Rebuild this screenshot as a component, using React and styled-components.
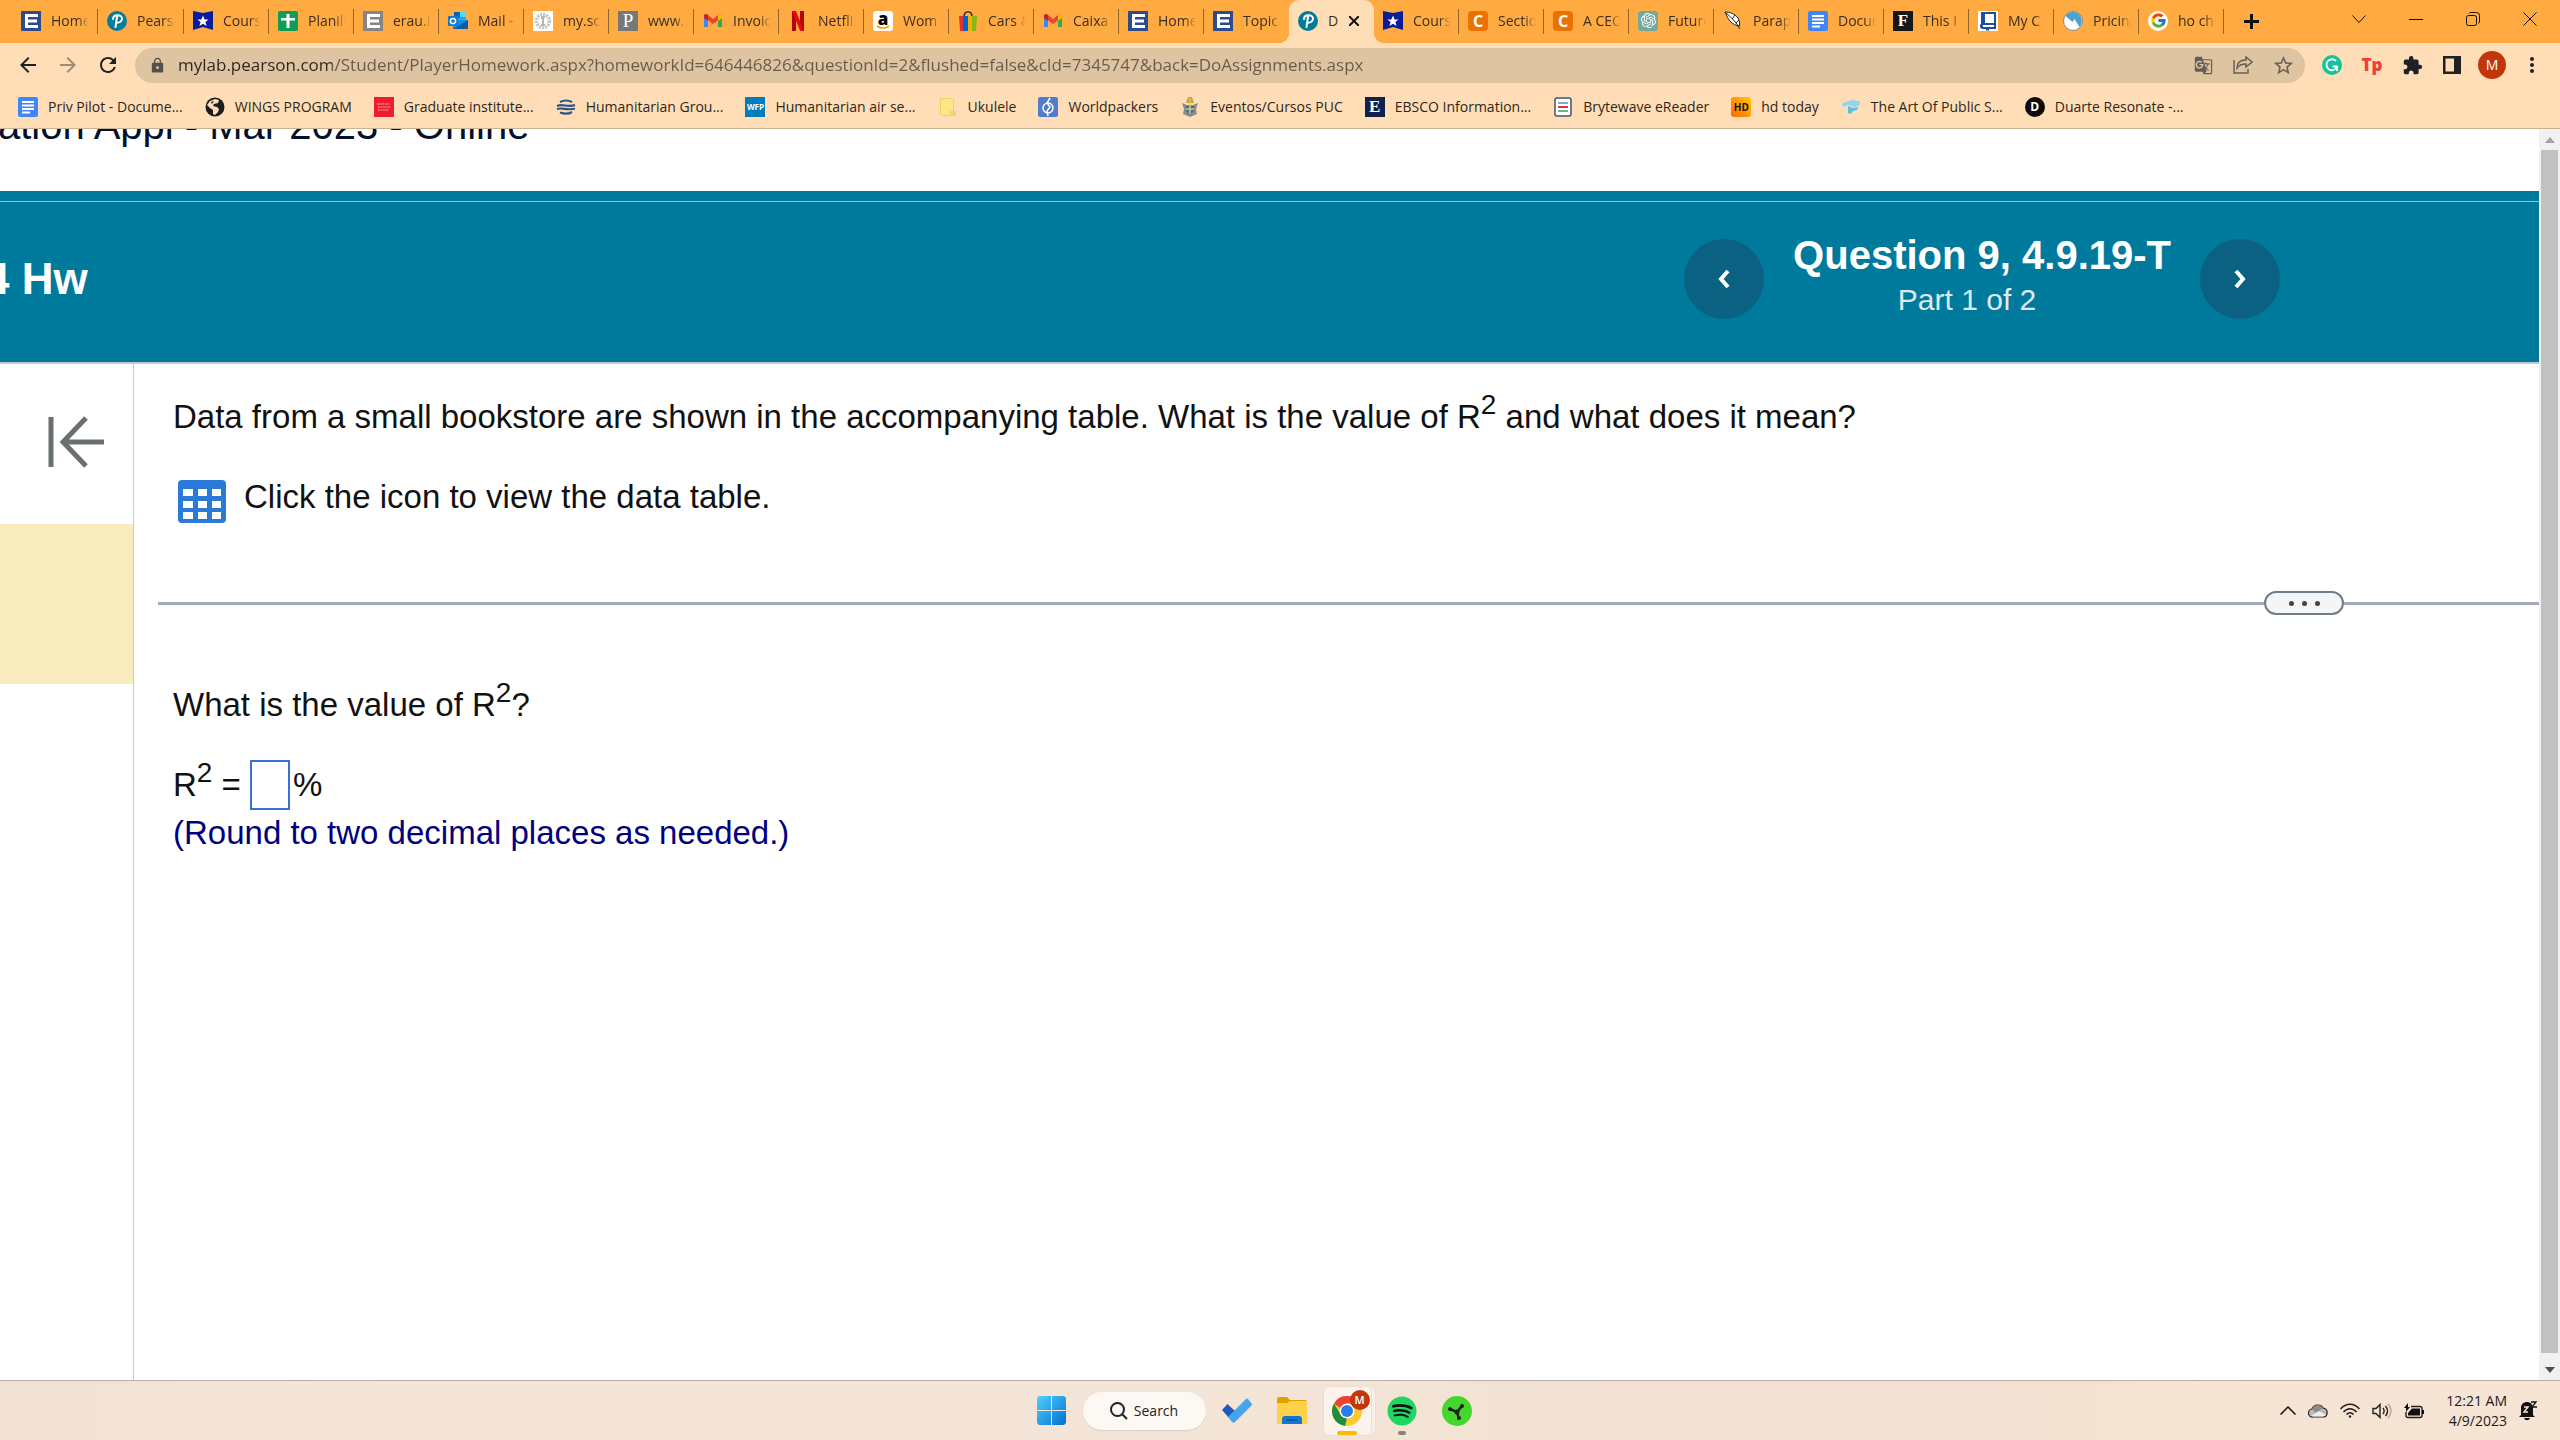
import React, { useState } from "react";
import styled, { createGlobalStyle, css } from "styled-components";
import { FcGoogle } from "react-icons/fc";
import { FaSpotify } from "react-icons/fa";
import {
  MdArrowBack,
  MdArrowForward,
  MdRefresh,
  MdLock,
  MdStarOutline,
  MdExtension,
  MdMoreVert,
  MdGTranslate
} from "react-icons/md";
import { SiOpenai } from "react-icons/si";

const UI_FONT = `"Open Sans", "Noto Sans", sans-serif`;
const PAGE_FONT = `"Liberation Sans", Arial, sans-serif`;

const GlobalStyle = createGlobalStyle`
  * {
    box-sizing: border-box;
  }

  body {
    margin: 0;
    background: #fff;
  }

  button {
    font: inherit;
    color: inherit;
    background: none;
    border: 0;
    padding: 0;
    cursor: pointer;
  }
`;

const Screen = styled.div`
  display: flex;
  flex-direction: column;
  height: 100vh;
  overflow: hidden;
  font-family: ${UI_FONT};
`;

/* ---------- favicons ---------- */

const Letter = styled.span`
  display: inline-flex;
  align-items: center;
  justify-content: center;
  flex: none;
  width: 20px;
  height: 20px;
  border-radius: ${p => p.$radius || "0"};
  background: ${p => p.$bg};
  color: ${p => p.$color || "#fff"};
  font-family: ${p => p.$font || UI_FONT};
  font-size: ${p => p.$size || "15px"};
  font-weight: ${p => p.$weight || 700};
  line-height: 20px;
`;

const Svg = styled.svg`
  display: block;
  flex: none;
  width: ${p => p.$w || 20}px;
  height: ${p => p.$h || p.$w || 20}px;
`;

const Erau = ({ bg = "#2c4c8f" }) => (
  <Svg viewBox="0 0 20 20">
    <path fill={bg} d="M0 0h20v20H0z" />
    <path fill="none" stroke="#fff" strokeWidth="3" d="M17 4.500H5.500v11H17M5.500 10H16" />
  </Svg>
);

const Pearson = () => (
  <Svg viewBox="0 0 20 20">
    <circle cx="10" cy="10" r="10" fill="#047a9c" />
    <path
      fill="none"
      stroke="#fff"
      strokeWidth="2"
      strokeLinecap="round"
      d="M6 8c0-5 9-5 9-.5 0 3.500-3 4.500-6 4M10 6l-1.500 10"
    />
  </Svg>
);

const Shield = () => (
  <Svg viewBox="0 0 20 20">
    <path fill="#0a1b9e" d="M0 0l10 2 10-2v19l-10-3-10 3z" />
    <path fill="#fff" d="M10 4.500l1.600 4h4l-3.200 2.600 1.200 4-3.600-2.400-3.600 2.400 1.200-4L4.400 8.500h4z" />
  </Svg>
);

const Sheets = () => (
  <Svg viewBox="0 0 20 20">
    <rect width="20" height="20" rx="2" fill="#0f9d58" />
    <path fill="#fff" d="M8.500 3h3v4H17v2.500h-5.500V17h-3V9.500H3V7h5.500z" />
  </Svg>
);

const Docs = () => (
  <Svg viewBox="0 0 20 20">
    <rect width="20" height="20" rx="2" fill="#4285f4" />
    <path stroke="#fff" strokeWidth="2" d="M4 5h12M4 8.500h12M4 12h12M4 15.500h8" />
  </Svg>
);

const Outlook = () => (
  <Svg viewBox="0 0 20 20">
    <path fill="#28a8ea" d="M6 1h12v9H6z" />
    <path fill="#0364b8" d="M6 1h6v6H6z" />
    <path fill="#50d9ff" d="M12 1h6v5h-6z" />
    <path fill="#1490df" d="M5 9l15 0v9H5z" />
    <path fill="#0a5dad" d="M5 18l15-9v9z" />
    <rect y="5" width="10" height="10" rx="1" fill="#0f78d4" />
    <circle cx="5" cy="10" r="2.600" fill="none" stroke="#fff" strokeWidth="1.500" />
  </Svg>
);

const Globe = () => (
  <Svg viewBox="0 0 20 20">
    <path fill="#fff" d="M0 0h20v20H0z" />
    <circle cx="10" cy="10" r="6.500" fill="none" stroke="#c4c4c4" strokeWidth="3.500" strokeDasharray="2 1" />
    <path fill="#b5b5b5" d="M8 5h4v2h-1v6h1v2H8v-2h1V8H8z" />
  </Svg>
);

const Gmail = () => (
  <Svg viewBox="0 0 20 20">
    <path fill="#4285f4" d="M1 5v11h4V8z" />
    <path fill="#34a853" d="M15 8v8h4V5z" />
    <path fill="#ea4335" d="M1 5c0-2 2-2.500 3.500-1.500L10 8l5.500-4.500C17 2.500 19 3 19 5l-1 2-8 6-8-6z" />
    <path fill="#c5221f" d="M1 5c0-2 2-2.500 4-1v6L1 7z" />
    <path fill="#fbbc04" d="M19 5c0-2-2-2.500-4-1v6l4-3z" />
  </Svg>
);

const Netflix = () => (
  <Svg viewBox="0 0 20 20">
    <path fill="#b1060f" d="M4 0h4v20l-4 .5zM12 0h4v20l-4-.5z" />
    <path fill="#e50914" d="M4 0h4l8 20-4-.5z" />
  </Svg>
);

const Amazon = () => (
  <Svg viewBox="0 0 20 20">
    <rect width="20" height="20" rx="3" fill="#fff" />
    <text x="10" y="13.500" textAnchor="middle" fontFamily="Open Sans" fontWeight="800" fontSize="17">
      a
    </text>
    <path d="M4 15c4 3 8 3 12 0" fill="none" stroke="#f90" strokeWidth="1.600" />
  </Svg>
);

const ShoppingBag = () => (
  <Svg viewBox="0 0 20 20">
    <path fill="none" stroke="#333" strokeWidth="1.500" d="M6 6c0-7 8-7 8 0" />
    <path fill="#e53238" d="M1 5h5v15H2z" />
    <path fill="#0064d2" d="M5 5h5v15H5z" />
    <path fill="#f5af02" d="M10 5h4v15h-4z" />
    <path fill="#86b817" d="M14 5h5l-1 15h-4z" />
  </Svg>
);

const Feather = () => (
  <Svg viewBox="0 0 20 20">
    <path
      fill="#fff"
      stroke="#222"
      strokeWidth="1"
      d="M2 1c5 0 10 2 13 6 1.500 3 2 5 1.500 8-3 0-7-2-9.500-5S4 5 2 1z"
    />
    <path fill="none" stroke="#222" strokeWidth="1" d="M3 2c5 4 10 9 14 16M9 8l3-4M13 12l3-3" />
  </Svg>
);

const Openai = styled.span`
  display: inline-flex;
  align-items: center;
  justify-content: center;
  flex: none;
  width: 20px;
  height: 20px;
  border-radius: 3px;
  background: #75a99c;
  color: #fff;
  font-size: 15px;
`;

const Notebook = () => (
  <Svg viewBox="0 0 20 20">
    <path fill="#fff" d="M0 0h20v20H0z" />
    <path fill="none" stroke="#1d4fa0" strokeWidth="2" d="M4 16V2h13v15H5a2 2 0 010-4h12" />
    <path fill="#1d4fa0" d="M3 1h4v13H3zM8 16h3v4l-1.500-1L8 20z" />
  </Svg>
);

const Peak = () => (
  <Svg viewBox="0 0 20 20">
    <circle cx="10" cy="10" r="9.500" fill="#fff" stroke="#888" />
    <path fill="#4ba3cf" d="M2.500 5a9 9 0 0115 0c2 4 1.500 8-1 11l-5-8-2 3z" />
  </Svg>
);

const Google = styled.span`
  display: inline-flex;
  align-items: center;
  justify-content: center;
  flex: none;
  width: 20px;
  height: 20px;
  border-radius: 50%;
  background: #fff;
  font-size: 17px;
`;

const DarkGlobe = () => (
  <Svg viewBox="0 0 20 20">
    <circle cx="10" cy="10" r="9.500" fill="#1d1d1d" />
    <path fill="#ffdeb7" d="M10 2l4 1-1 3-4 1-1 2 4 1 2 2-1 3-3 3-2-1V13L5 11 2 8l3-4z" />
    <path fill="#1d1d1d" d="M6 5l3-1-2 3z" />
  </Svg>
);

const RedCard = () => (
  <Svg viewBox="0 0 20 20">
    <path fill="#ee1c2e" d="M0 0h20v20H0z" />
    <path stroke="#f9a3ab" strokeWidth="1.200" strokeDasharray="2 .6" d="M3 7h13M4 10h13M4 13h11" />
  </Svg>
);

const Stripes = () => (
  <Svg viewBox="0 0 20 20">
    <path
      fill="none"
      stroke="#2f5183"
      strokeWidth="2.200"
      d="M4 5c4-2 8-2 12 0M1 9c6-3 10 2 18-1M1 12c6-2 10 2 18-.5M4 15.500c4 1.500 8 2 12-.5"
    />
  </Svg>
);

const Folder = () => (
  <Svg viewBox="0 0 20 20">
    <path fill="#ffe58a" stroke="#f0d264" d="M2.500 1.500h13v13h2v4h-13l-2-1z" />
    <path fill="#f5d567" d="M12 14h5v4l-2 1h-3z" />
  </Svg>
);

const Worldpackers = () => (
  <Svg viewBox="0 0 20 20">
    <rect width="20" height="20" rx="2" fill="#4f7ccb" />
    <circle cx="10" cy="11" r="5" fill="none" stroke="#fff" strokeWidth="1.500" />
    <path fill="none" stroke="#fff" strokeWidth="1.500" d="M12 1L9 6l3 4-3 4 1 5" />
  </Svg>
);

const Crest = () => (
  <Svg viewBox="0 0 20 20">
    <path fill="#c9a23e" d="M8 0h4l2 6H6z" />
    <path fill="#8d8d80" d="M2 6l5 2h6l5-2-2 6 1 5-7 3-7-3 1-5z" />
    <path fill="#3d6fa5" d="M6 9h8v5l-4 4-4-4z" />
    <path stroke="#e3c862" strokeWidth="1.500" d="M10 1v16M6 12h8" />
  </Svg>
);

const Reader = () => (
  <Svg viewBox="0 0 20 20">
    <rect x="2" y="1" width="16" height="18" rx="2" fill="#fff" stroke="#44546a" strokeWidth="1.500" />
    <path stroke="#4a90c4" strokeWidth="1.500" d="M5 6h10" />
    <path stroke="#e2304b" strokeWidth="2" d="M5 10h10" />
    <path stroke="#35a06a" strokeWidth="1.500" d="M5 14h10" />
  </Svg>
);

const Scroll = () => (
  <Svg viewBox="0 0 20 20">
    <path fill="#8fd6f0" d="M2 6l9-3 7 1q2 2 0 5l-5 1-6-2-4 2q-3-2-1-4z" />
    <path fill="#5bbfe6" d="M7 9l5 2 5-1-1 3-4 1-2 3-3-1z" />
  </Svg>
);

/* ---------- tab strip ---------- */

const TabStrip = styled.div`
  display: flex;
  flex: none;
  height: 43px;
  padding: 0 2px 0 12px;
  background: #ffab42;
`;

const TabList = styled.div`
  display: flex;
`;

const activeTab = css`
  background: #ffdeb7;
  border-radius: 10px 10px 0 0;

  &::before,
  &::after {
    content: "";
    position: absolute;
    bottom: 0;
    width: 10px;
    height: 10px;
  }

  &::before {
    right: 100%;
    background: radial-gradient(circle at 0 0, transparent 10px, #ffdeb7 10px);
  }

  &::after {
    left: 100%;
    background: radial-gradient(circle at 100% 0, transparent 10px, #ffdeb7 10px);
  }
`;

const dividedTab = css`
  &::after {
    content: "";
    position: absolute;
    right: 0;
    top: 9px;
    width: 1px;
    height: 25px;
    background: #8f6530;
  }
`;

const Tab = styled.button`
  position: relative;
  display: flex;
  align-items: center;
  gap: 10px;
  width: 85px;
  height: 43px;
  padding: 0 0 2px 9px;
  color: #3b2f20;
  font-size: 14px;
  ${p => p.$active && activeTab}
  ${p => p.$divided && dividedTab}

  &:nth-child(-n + 2) {
    width: 86px;
  }
`;

const TabLabel = styled.span`
  width: ${p => (p.$short ? "11px" : "38px")};
  overflow: hidden;
  white-space: nowrap;
  text-align: left;
  line-height: 20px;
  mask-image: ${p =>
    p.$short ? "none" : "linear-gradient(to right, #000 70%, transparent)"};
`;

const NewTab = styled.button`
  display: flex;
  align-items: center;
  justify-content: center;
  width: 54px;
`;

const WindowControls = styled.div`
  display: flex;
  margin-left: auto;
`;

const WindowButton = styled.button`
  display: flex;
  align-items: center;
  justify-content: center;
  width: 57px;
  height: 38px;
`;

/* ---------- toolbar ---------- */

const Toolbar = styled.div`
  display: flex;
  align-items: center;
  flex: none;
  height: 44px;
  padding: 0 8px;
  background: #ffdeb7;
`;

const ToolButton = styled.button`
  display: flex;
  align-items: center;
  justify-content: center;
  flex: none;
  width: 40px;
  height: 40px;
  color: ${p => p.$color || "#202124"};
  font-size: ${p => p.$size || "24px"};
`;

const Omnibox = styled.div`
  display: flex;
  align-items: center;
  flex: 1;
  height: 35px;
  margin: 0 7px;
  padding: 0 2px 0 14px;
  border-radius: 18px;
  background: #dec4a1;
  color: #55504a;
  font-size: 17px;
`;

const UrlInput = styled.input`
  flex: 1;
  min-width: 0;
  margin-left: 12px;
  padding: 0;
  border: 0;
  outline: 0;
  font-family: ${UI_FONT};
  font-size: 17px;
  line-height: 24px;
  color: transparent;
  background: linear-gradient(to right, #2b2620 154px, #665b4d 154px);
  background-clip: text;
`;

const Avatar = styled(Letter)`
  width: 28px;
  height: 28px;
  border-radius: 50%;
`;

const BookmarkBar = styled.nav`
  display: flex;
  align-items: center;
  flex: none;
  gap: 22px;
  height: 42px;
  padding: 0 0 2px 18px;
  border-bottom: 1px solid #c9b08f;
  background: #ffdeb7;
`;

const Bookmark = styled.a`
  display: flex;
  align-items: center;
  gap: 10px;
  color: #2e261c;
  font-size: 14px;
  line-height: 20px;
  white-space: nowrap;
  text-decoration: none;
`;

/* ---------- page ---------- */

const Viewport = styled.div`
  display: flex;
  flex: 1;
  min-height: 0;
`;

const Page = styled.div`
  display: flex;
  flex-direction: column;
  flex: 1;
  min-width: 0;
  background: #fff;
  font-family: ${PAGE_FONT};
`;

const CourseBar = styled.div`
  flex: none;
  height: 62px;
  overflow: hidden;
`;

const CourseTitle = styled.h1`
  margin: -26px 0 0 -2px;
  color: #05112a;
  font-size: 40px;
  font-weight: 400;
  line-height: 44px;
  white-space: nowrap;
`;

const AssignmentHeader = styled.header`
  flex: none;
  border-top: 10px solid #007a9c;
  border-bottom: 2px solid #c0cad6;
  background: #007a9c;
`;

const AssignmentRow = styled.div`
  display: flex;
  align-items: center;
  height: 161px;
  padding: 0 259px 6px 0;
  border-top: 1px solid #8fc4d4;
  color: #fff;
`;

const AssignmentName = styled.h2`
  margin: 0 auto 0 -15px;
  font-size: 44px;
  line-height: 48px;
`;

const QuestionNav = styled.div`
  display: flex;
  align-items: center;
  gap: 29px;
`;

const NavButton = styled.button`
  display: flex;
  align-items: center;
  justify-content: center;
  width: 80px;
  height: 80px;
  border-radius: 50%;
  background: #0a6181;
`;

const QuestionTitle = styled.h3`
  margin: 0;
  font-size: 40px;
  line-height: 42px;
`;

const QuestionPart = styled.p`
  margin: 0;
  padding-right: 30px;
  color: #dfe9f0;
  font-size: 30px;
  line-height: 48px;
  text-align: center;
`;

const Body = styled.div`
  display: flex;
  flex: 1;
  min-height: 0;
`;

const Sidebar = styled.aside`
  flex: none;
  width: 134px;
  border-right: 1px solid #c3cad9;
`;

const CollapseButton = styled.button`
  display: flex;
  align-items: center;
  justify-content: center;
  width: 100%;
  height: 160px;
  padding: 0 0 4px 18px;
`;

const CurrentQuestion = styled.div`
  height: 160px;
  background: #f8ebbd;
`;

const Main = styled.main`
  flex: 1;
  min-width: 0;
  padding: 33px 0 0 24px;
  color: #111;
  font-size: 33px;
  line-height: 40px;
`;

const Prompt = styled.p`
  display: flex;
  align-items: center;
  gap: ${p => p.$gap || "0"};
  margin: 0 0 0 15px;
  padding-top: ${p => p.$top || "0"};
  white-space: pre;
  color: ${p => p.$color || "inherit"};
`;

const Sup = styled.sup`
  font-size: 28px;
  line-height: 0;
  vertical-align: 14px;
`;

const TableButton = styled.button`
  padding: 3px 0 0 5px;
  height: 40px;
`;

const SplitRow = styled.div`
  display: flex;
  align-items: center;
  margin: 74px 0 70px;
`;

const SplitLine = styled.span`
  flex: ${p => (p.$end ? "0 0 195px" : "1")};
  height: 3px;
  background: #a3abba;
`;

const SplitHandle = styled.button`
  display: flex;
  align-items: center;
  justify-content: center;
  gap: 8px;
  width: 80px;
  height: 24px;
  border: 2px solid #6f7c89;
  border-radius: 12px;
  background: #f3f5f7;

  i {
    width: 5px;
    height: 5px;
    border-radius: 50%;
    background: #444;
  }
`;

const AnswerInput = styled.input`
  width: 40px;
  height: 50px;
  margin: 0 3px 0 9px;
  padding: 0 4px;
  border: 2px solid #3c6fd1;
  outline: 0;
  font: inherit;
`;

const Scrollbar = styled.div`
  display: flex;
  flex-direction: column;
  align-items: center;
  flex: none;
  width: 21px;
  background: #f1f1f1;
`;

const ScrollArrow = styled.button`
  display: flex;
  align-items: center;
  justify-content: center;
  height: 21px;
`;

const ScrollThumb = styled.div`
  flex: 1;
  width: 17px;
  margin-bottom: 6px;
  background: #c1c1c1;
`;

/* ---------- taskbar ---------- */

const Taskbar = styled.footer`
  display: grid;
  grid-template-columns: 1fr auto 1fr;
  align-items: center;
  flex: none;
  height: 60px;
  border-top: 1px solid #b9aea7;
  background: linear-gradient(to right, #f2e3d5, #f4e5d8 40%, #f3e2d3 70%, #f6e4d4);
`;

const TaskItems = styled.div`
  grid-column: 2;
  display: flex;
  align-items: center;
  gap: 8px;
  padding-right: 52px;
`;

const TaskButton = styled.button`
  position: relative;
  display: flex;
  align-items: center;
  justify-content: center;
  width: 47px;
  height: 48px;
  border-radius: 5px;
  ${p =>
    p.$open &&
    css`
      background: #fbf3ec;
      box-shadow: 0 0 0 1px #eadfd5, 4px 0 0 #f8eee6, 5px 0 0 #eadfd5;
    `}

  &::after {
    content: "";
    display: ${p => (p.$bar ? "block" : "none")};
    position: absolute;
    bottom: 0;
    width: ${p => (p.$open ? 20 : 8)}px;
    height: 4px;
    border-radius: 2px;
    background: ${p => p.$bar};
  }
`;

const ProfileBadge = styled(Letter)`
  position: absolute;
  top: 3px;
  right: 1px;
`;

const SearchButton = styled.button`
  display: flex;
  align-items: center;
  justify-content: center;
  gap: 6px;
  width: 123px;
  height: 38px;
  border-radius: 19px;
  background: #fcf8f3;
  box-shadow: 0 1px 1px #dccfc3;
  color: #222;
  font-size: 14px;
`;

const Tray = styled.div`
  display: flex;
  align-items: center;
  justify-self: end;
  gap: 12px;
  padding-right: 23px;
  color: #1d1a17;
`;

const Clock = styled.time`
  margin-left: 10px;
  text-align: right;
  font-size: 14px;
  line-height: 20px;
`;

const tabs = [
  { label: "Home", icon: <Erau /> },
  { label: "Pearson", icon: <Pearson /> },
  { label: "Course", icon: <Shield /> },
  { label: "Planilha", icon: <Sheets /> },
  { label: "erau.i", icon: <Erau bg="#858585" /> },
  { label: "Mail -", icon: <Outlook /> },
  { label: "my.sc", icon: <Globe /> },
  {
    label: "www.",
    icon: (
      <Letter $bg="#777" $font="Liberation Serif" $size="19px" $weight={400}>
        P
      </Letter>
    )
  },
  { label: "Invoice", icon: <Gmail /> },
  { label: "Netflix", icon: <Netflix /> },
  { label: "Wom", icon: <Amazon /> },
  { label: "Cars &", icon: <ShoppingBag /> },
  { label: "Caixa", icon: <Gmail /> },
  { label: "Home", icon: <Erau /> },
  { label: "Topic", icon: <Erau /> },
  { label: "D", icon: <Pearson /> },
  { label: "Course", icon: <Shield /> },
  { label: "Section", icon: <Letter $bg="#eb7100" $radius="4px" $size="16px">C</Letter> },
  { label: "A CEO", icon: <Letter $bg="#eb7100" $radius="4px" $size="16px">C</Letter> },
  {
    label: "Future",
    icon: (
      <Openai>
        <SiOpenai />
      </Openai>
    )
  },
  { label: "Parap", icon: <Feather /> },
  { label: "Docum", icon: <Docs /> },
  { label: "This I", icon: <Letter $bg="#171717" $font="Liberation Serif" $size="17px">F</Letter> },
  { label: "My C", icon: <Notebook /> },
  { label: "Pricing", icon: <Peak /> },
  {
    label: "ho chi",
    icon: (
      <Google>
        <FcGoogle />
      </Google>
    )
  }
];

const bookmarks = [
  { label: "Priv Pilot - Docume...", icon: <Docs /> },
  { label: "WINGS PROGRAM", icon: <DarkGlobe /> },
  { label: "Graduate institute...", icon: <RedCard /> },
  { label: "Humanitarian Grou...", icon: <Stripes /> },
  { label: "Humanitarian air se...", icon: <Letter $bg="#007dbc" $size="8px">WFP</Letter> },
  { label: "Ukulele", icon: <Folder /> },
  { label: "Worldpackers", icon: <Worldpackers /> },
  { label: "Eventos/Cursos PUC", icon: <Crest /> },
  {
    label: "EBSCO Information...",
    icon: <Letter $bg="#10214d" $font="Liberation Serif" $size="17px">E</Letter>
  },
  { label: "Brytewave eReader", icon: <Reader /> },
  {
    label: "hd today",
    icon: (
      <Letter $bg="linear-gradient(45deg, #f60, #fc0)" $color="#111" $radius="3px" $size="10px">
        HD
      </Letter>
    )
  },
  { label: "The Art Of Public S...", icon: <Scroll /> },
  { label: "Duarte Resonate -...", icon: <Letter $bg="#0b0b0b" $radius="50%" $size="12px">D</Letter> }
];

const Stroke = ({ d, w = 14, h = w, width = 1, color = "#111", ...rest }) => (
  <Svg viewBox={`0 0 ${w} ${h}`} $w={w} $h={h} fill="none" stroke={color} strokeWidth={width} {...rest}>
    <path d={d} />
  </Svg>
);

const Tabs = () => (
  <TabStrip>
    <TabList role="tablist">
      {tabs.map(({ label, icon }, i) => (
        <Tab
          key={i}
          role="tab"
          aria-selected={i === 15}
          $active={i === 15}
          $divided={i !== 14 && i !== 15}
        >
          {icon}
          <TabLabel $short={i === 15}>{label}</TabLabel>
          {i === 15 && <Stroke w={10} width={2} d="M0 0l10 10M10 0L0 10" />}
        </Tab>
      ))}
    </TabList>
    <NewTab aria-label="New tab">
      <Stroke w={15} width={3} d="M7.500 0v15M0 7.500h15" />
    </NewTab>
    <WindowControls>
      <WindowButton aria-label="Search tabs">
        <Stroke w={14} h={8} d="M.5.5L7 7.500l6.500-7" />
      </WindowButton>
      <WindowButton aria-label="Minimize">
        <Stroke w={14} h={1} d="M0 .5h14" />
      </WindowButton>
      <WindowButton aria-label="Restore">
        <Stroke d="M2.500 3.500h6a2 2 0 012 2v6a2 2 0 01-2 2h-6a2 2 0 01-2-2v-6a2 2 0 012-2zM3 1.500l1-1h6.500a3 3 0 013 3V10l-1 1.500" />
      </WindowButton>
      <WindowButton aria-label="Close">
        <Stroke d="M.5.5l13 13M13.500.5l-13 13" />
      </WindowButton>
    </WindowControls>
  </TabStrip>
);

const BrowserToolbar = () => {
  const [url, setUrl] = useState(
    "mylab.pearson.com/Student/PlayerHomework.aspx?homeworkId=646446826&questionId=2&flushed=false&cId=7345747&back=DoAssignments.aspx"
  );

  return (
    <Toolbar>
      <ToolButton aria-label="Back">
        <MdArrowBack />
      </ToolButton>
      <ToolButton aria-label="Forward" $color="#9c8c78">
        <MdArrowForward />
      </ToolButton>
      <ToolButton aria-label="Reload">
        <MdRefresh />
      </ToolButton>
      <Omnibox>
        <MdLock />
        <UrlInput aria-label="Address" value={url} onChange={e => setUrl(e.target.value)} />
        <ToolButton aria-label="Translate" $color="#665f57" $size="19px">
          <MdGTranslate />
        </ToolButton>
        <ToolButton aria-label="Share" $color="#665f57">
          <Stroke
            w={20}
            width={1.5}
            color="#665f57"
            d="M1 5v13h14v-4M4 13c0-6 4-8 9-8V2l6 5-6 5V9c-4 0-7 1-9 4z"
          />
        </ToolButton>
        <ToolButton aria-label="Bookmark" $color="#665f57" $size="23px">
          <MdStarOutline />
        </ToolButton>
      </Omnibox>
      <ToolButton aria-label="Grammarly">
        <Svg viewBox="0 0 20 20">
          <circle cx="10" cy="10" r="10" fill="#15c39a" />
          <path fill="none" stroke="#fff" strokeWidth="1.800" d="M14 6a5.500 5.500 0 101 6M10.500 11.500H15V16" />
        </Svg>
      </ToolButton>
      <ToolButton aria-label="Teleparty">
        <Letter $bg="none" $color="#ef3e3a" $size="17px" $weight={800}>
          Tp
        </Letter>
      </ToolButton>
      <ToolButton aria-label="Extensions" $size="21px">
        <MdExtension />
      </ToolButton>
      <ToolButton aria-label="Side panel">
        <Svg viewBox="0 0 18 18" $w={18}>
          <path fill="#202124" fillRule="evenodd" d="M0 0h18v18H0zM2.500 2.500v13H11v-13z" />
        </Svg>
      </ToolButton>
      <ToolButton aria-label="Profile">
        <Avatar $bg="#c2360c" $weight={400} $size="14px">
          M
        </Avatar>
      </ToolButton>
      <ToolButton aria-label="Menu">
        <MdMoreVert />
      </ToolButton>
    </Toolbar>
  );
};

const Question = () => {
  const [answer, setAnswer] = useState("");

  return (
    <Main>
      <Prompt>
        <span>
          Data from a small bookstore are shown in the accompanying table. What is the value of R
          <Sup>2</Sup> and what does it mean?
        </span>
      </Prompt>
      <Prompt $top="40px" $gap="18px">
        <TableButton aria-label="View the data table">
          <Svg viewBox="0 0 48 43" $w={48} $h={43}>
            <rect width="48" height="43" rx="4" fill="#2b7ad8" />
            <path
              fill="#fff"
              d="M5 9h10v7H5zM20 9h9v7h-9zM34 9h9v7h-9zM5 21h10v7H5zM20 21h9v7h-9zM34 21h9v7h-9zM5 32h10v7H5zM20 32h9v7h-9zM34 32h9v7h-9z"
            />
          </Svg>
        </TableButton>
        Click the icon to view the data table.
      </Prompt>
      <SplitRow>
        <SplitLine />
        <SplitHandle aria-label="Resize panes">
          <i />
          <i />
          <i />
        </SplitHandle>
        <SplitLine $end />
      </SplitRow>
      <Prompt>
        <span>
          What is the value of R<Sup>2</Sup>?
        </span>
      </Prompt>
      <Prompt $top="35px">
        <label htmlFor="r-squared">
          R<Sup>2</Sup> =
        </label>
        <AnswerInput id="r-squared" value={answer} onChange={e => setAnswer(e.target.value)} />%
      </Prompt>
      <Prompt $top="3px" $color="#00007f">
        (Round to two decimal places as needed.)
      </Prompt>
    </Main>
  );
};

const SystemTray = () => (
  <Tray>
    <Stroke w={16} h={9} width={1.5} d="M.5 8.500L8 1l7.500 7.500" />
    <Svg viewBox="0 0 20 14" $w={20} $h={14}>
      <path
        fill="#bbb"
        stroke="#222"
        strokeWidth="1.200"
        d="M5 13a4 4 0 01-1-8c2-5 9-5 11-1 6 1 5 9 0 9z"
      />
      <path fill="#8b8b8b" d="M4 5c2-5 9-5 11-1L8 9z" />
      <path fill="#eee" d="M3 12l8-5 7 4-2 1.500H5z" />
    </Svg>
    <Svg viewBox="0 0 20 15" $w={20} $h={15} fill="none" stroke="#222" strokeWidth="1.500">
      <path d="M.5 6c5.500-6.500 13.500-6.500 19 0M3.500 9c4-4.500 9-4.500 13 0M6.500 11.500c2-2.500 5-2.500 7 0" />
      <circle cx="10" cy="13.500" r="1.200" fill="#222" stroke="none" />
    </Svg>
    <Svg viewBox="0 0 20 16" $w={20} $h={16} fill="none" stroke="#222" strokeWidth="1.400">
      <path d="M1 5.500h3l4-4v13l-4-4H1zM11 5c1.500 2 1.500 4 0 6M13.500 3c2.500 3 2.500 7 0 10" />
      <path stroke="#b3a79c" d="M16 1c4 4 4 10 0 14" />
    </Svg>
    <Svg viewBox="0 0 20 16" $w={20} $h={16}>
      <path fill="none" stroke="#222" strokeWidth="1.400" d="M7 3.500h9a2 2 0 012 2v7a2 2 0 01-2 2H4a2 2 0 01-2-2V9" />
      <path fill="#111" d="M4 12.500V10l4-4.500h8v7zM18 7h2v4h-2zM4 0L0 5h2v4l4-5H4z" />
    </Svg>
    <Clock>
      12:21 AM
      <br />
      4/9/2023
    </Clock>
    <Svg viewBox="0 0 18 20" $w={18} $h={20}>
      <path fill="#111" d="M2 14V7c0-8 12-8 12 0v7l2 2H0zM5 17h6c-1 3-5 3-6 0z" />
      <path fill="none" stroke="#f3e2d3" strokeWidth="1.500" d="M5 6h4l-4 5h4" />
      <path fill="none" stroke="#111" strokeWidth="1.300" d="M12 1h5l-4 5h5" />
    </Svg>
  </Tray>
);

const App = () => (
  <Screen>
    <GlobalStyle />
    <Tabs />
    <BrowserToolbar />
    <BookmarkBar>
      {bookmarks.map(({ label, icon }) => (
        <Bookmark key={label} href="#">
          {icon}
          {label}
        </Bookmark>
      ))}
    </BookmarkBar>
    <Viewport>
      <Page>
        <CourseBar>
          <CourseTitle>ation Appl - Mar 2023 - Online</CourseTitle>
        </CourseBar>
        <AssignmentHeader>
          <AssignmentRow>
            <AssignmentName>4 Hw</AssignmentName>
            <QuestionNav>
              <NavButton aria-label="Previous question">
                <Stroke w={14} h={20} width={4} color="#fff" d="M11 2L4 10l7 8" />
              </NavButton>
              <div>
                <QuestionTitle>Question 9, 4.9.19-T</QuestionTitle>
                <QuestionPart>Part 1 of 2</QuestionPart>
              </div>
              <NavButton aria-label="Next question">
                <Stroke w={14} h={20} width={4} color="#fff" d="M3 2l7 8-7 8" />
              </NavButton>
            </QuestionNav>
          </AssignmentRow>
        </AssignmentHeader>
        <Body>
          <Sidebar>
            <CollapseButton aria-label="Collapse question list">
              <Stroke w={56} h={52} width={5} color="#6a7070" d="M3 1v50M56 26H15M38 2L15 26l23 24" />
            </CollapseButton>
            <CurrentQuestion />
          </Sidebar>
          <Question />
        </Body>
      </Page>
      <Scrollbar>
        <ScrollArrow aria-label="Scroll up">
          <Svg viewBox="0 0 10 6" $w={10} $h={6}>
            <path fill="#a3a3a3" d="M0 6l5-6 5 6z" />
          </Svg>
        </ScrollArrow>
        <ScrollThumb />
        <ScrollArrow aria-label="Scroll down">
          <Svg viewBox="0 0 10 6" $w={10} $h={6}>
            <path fill="#505050" d="M0 0l5 6 5-6z" />
          </Svg>
        </ScrollArrow>
      </Scrollbar>
    </Viewport>
    <Taskbar>
      <TaskItems>
        <TaskButton aria-label="Start">
          <Svg viewBox="0 0 29 29" $w={29}>
            <defs>
              <linearGradient id="win" x1="0" y1="0" x2="1" y2="1">
                <stop offset="0" stopColor="#4fd0ff" />
                <stop offset="1" stopColor="#0070d0" />
              </linearGradient>
            </defs>
            <path fill="url(#win)" d="M2 0h12v14H0V2zM15 0h12l2 2v12H15zM0 15h14v14H2l-2-2zM15 15h14v12l-2 2H15z" />
          </Svg>
        </TaskButton>
        <SearchButton>
          <Svg viewBox="0 0 18 18" $w={18} fill="none" stroke="#222" strokeWidth="2">
            <circle cx="7.500" cy="7.500" r="6.500" />
            <path d="M12 12l5 5" />
          </Svg>
          Search
        </SearchButton>
        <TaskButton aria-label="To Do">
          <Svg viewBox="0 0 30 25" $w={30} $h={25}>
            <path fill="#1d5bbf" d="M0 12l5.500-6 7.500 7-6 7z" />
            <path fill="#42a5ee" d="M6 19L24 1q1-1 2 0l4 5q0 1-1 2L13 24q-1.500 1-3 0z" />
          </Svg>
        </TaskButton>
        <TaskButton aria-label="File Explorer">
          <Svg viewBox="0 0 30 27" $w={30} $h={27}>
            <path fill="#dfa000" d="M0 6V2q0-2 2-2h8l3 3h15q2 0 2 2v5H0z" />
            <path fill="#ffd04a" d="M0 6h10l3-2h17v23H0z" />
            <path fill="#0f78d0" d="M5 27v-5q0-3 3-3h14q3 0 3 3v5z" />
            <path stroke="#0b5096" strokeWidth="1.500" d="M9 23h12" />
          </Svg>
        </TaskButton>
        <TaskButton aria-label="Chrome" $open $bar="#ffb900">
          <Svg viewBox="0 0 30 30" $w={30}>
            <circle cx="15" cy="15" r="15" fill="#fcc934" />
            <path fill="#ea4335" d="M2 7.500a15 15 0 0126 0H15v9z" />
            <path fill="#1e8e3e" d="M2 7.500L9 19l6 3-2 7.900A15 15 0 012 7.500z" />
            <circle cx="15" cy="15" r="7.500" fill="#fff" />
            <circle cx="15" cy="15" r="6" fill="#2a7de9" />
          </Svg>
          <ProfileBadge $bg="#c2360c" $radius="50%" $size="11px" $weight={600}>
            M
          </ProfileBadge>
        </TaskButton>
        <TaskButton aria-label="Spotify" $bar="#8b8179">
          <Svg viewBox="0 0 30 30" $w={30}>
            <circle cx="15" cy="15" r="13" fill="#111" />
            <FaSpotify size={30} color="#1ed760" />
          </Svg>
        </TaskButton>
        <TaskButton aria-label="Razer">
          <Svg viewBox="0 0 30 30" $w={30}>
            <circle cx="15" cy="15" r="15" fill="#44d62c" />
            <path stroke="#222" strokeWidth="2.500" d="M15 16L8 13M15 16l5-6M15 16l2 7" />
            <circle cx="15" cy="16" r="2.500" fill="#222" />
            <circle cx="8" cy="13" r="2" fill="#222" />
            <circle cx="20" cy="10" r="2" fill="#222" />
            <circle cx="17" cy="22" r="2" fill="#222" />
          </Svg>
        </TaskButton>
      </TaskItems>
      <SystemTray />
    </Taskbar>
  </Screen>
);

export default App;
